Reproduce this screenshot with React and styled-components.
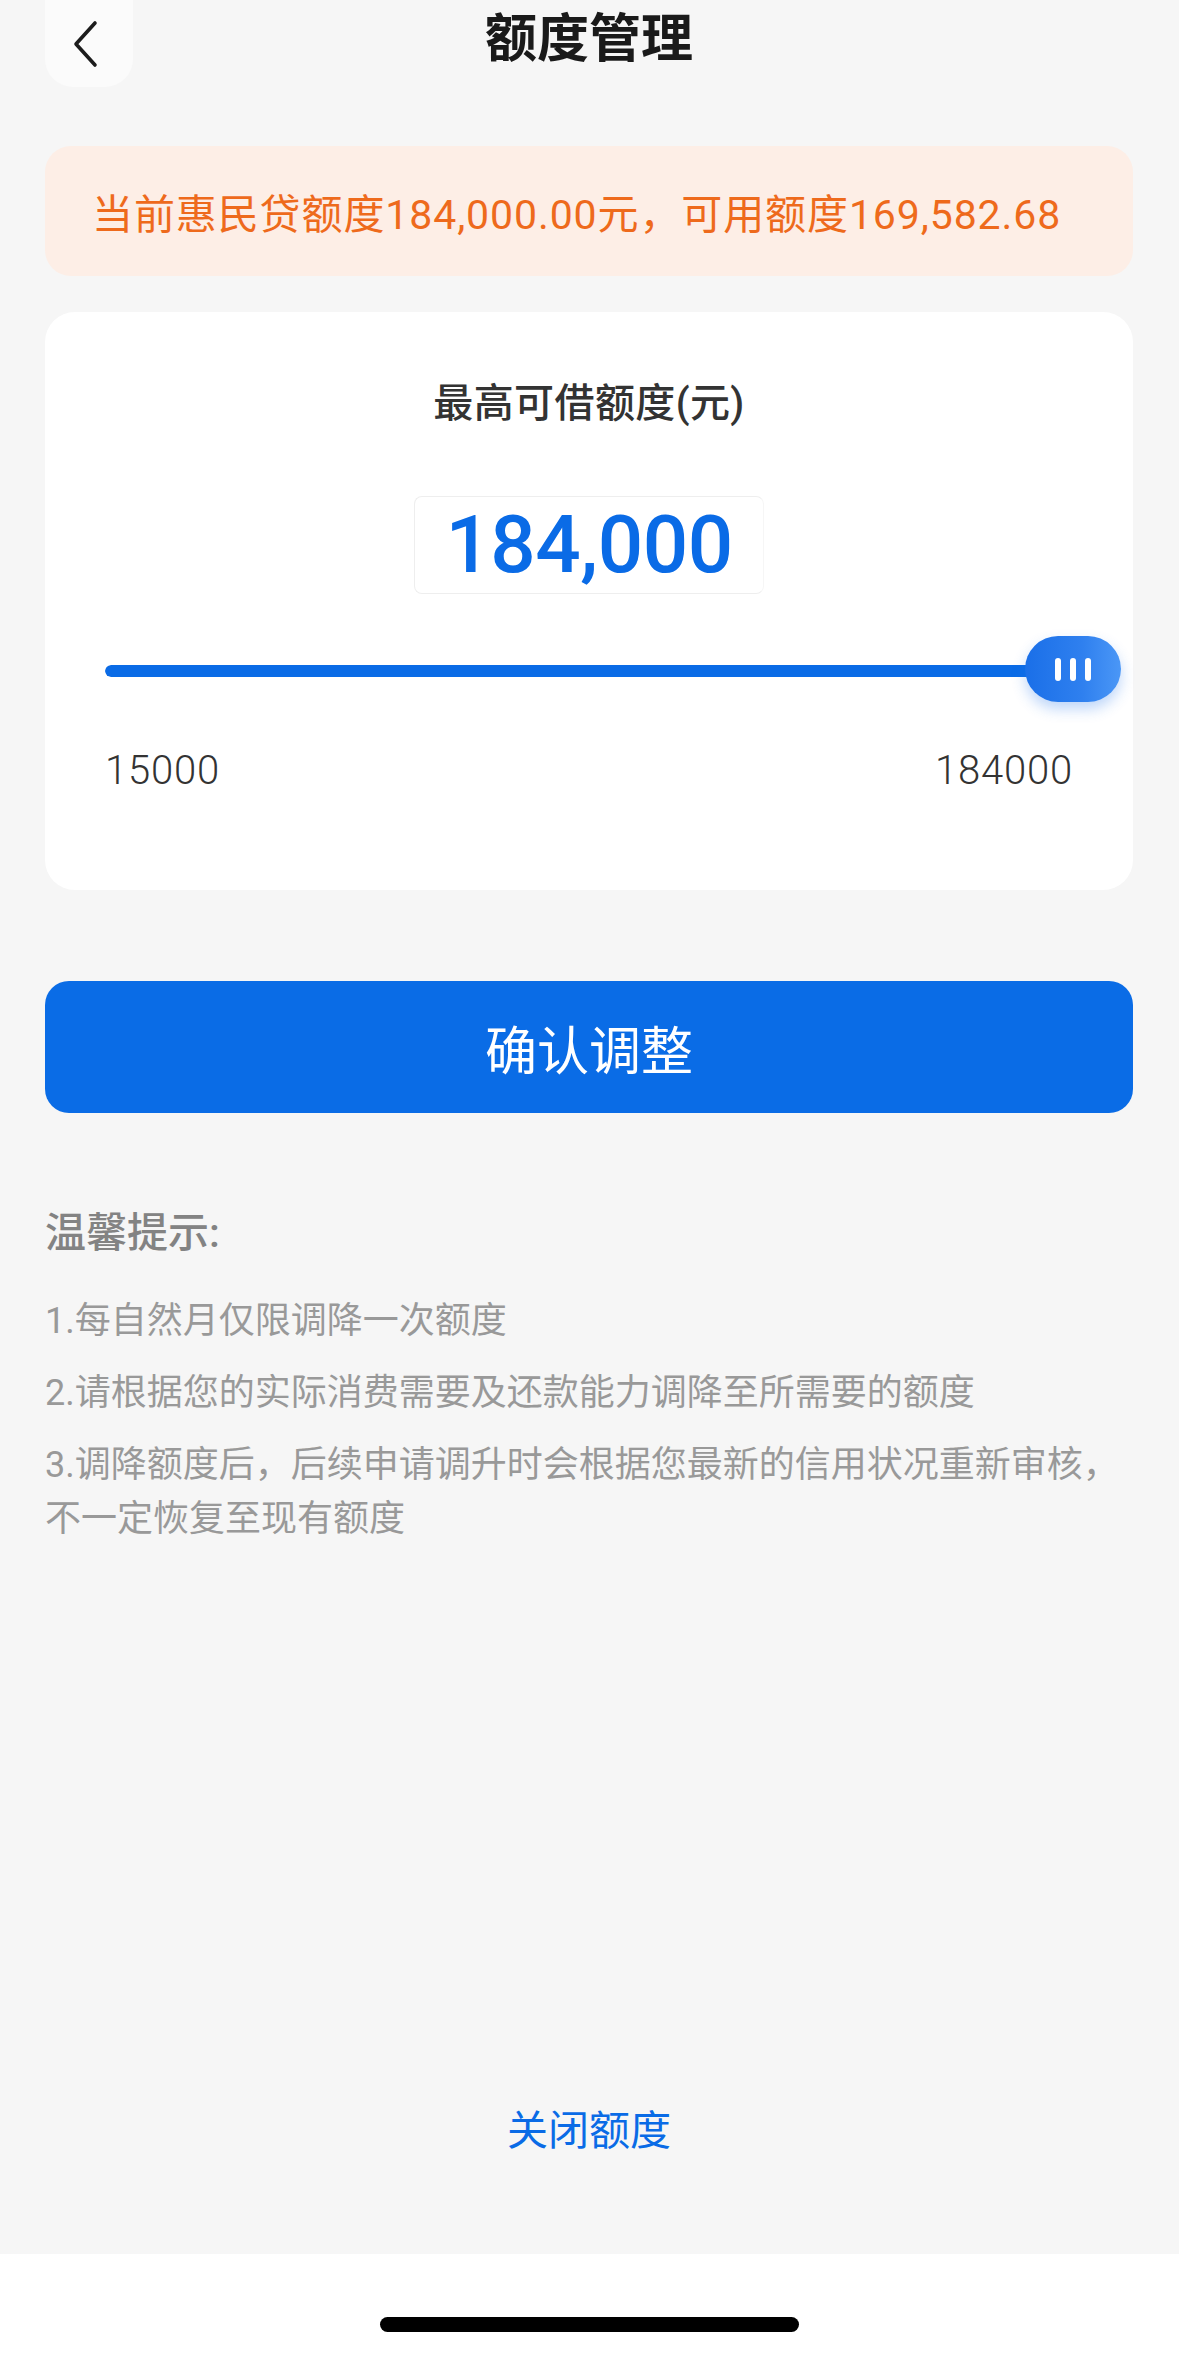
import React from 'react';
import styled, { createGlobalStyle } from 'styled-components';

const GlobalStyle = createGlobalStyle`
  html, body {
    margin: 0;
    padding: 0;
    background: #f6f6f6;
  }
  * {
    box-sizing: border-box;
  }
`;

const FONT = `Roboto, "Noto Sans CJK SC", sans-serif`;

const MIN = 15000;
const MAX = 184000;
const VALUE = 184000;

const tips = [
    '1.每自然月仅限调降一次额度',
    '2.请根据您的实际消费需要及还款能力调降至所需要的额度',
    '3.调降额度后，后续申请调升时会根据您最新的信用状况重新审核，不一定恢复至现有额度',
];

const App = () => {
    const percent = ((VALUE - MIN) / (MAX - MIN)) * 100;
    return (
        <Page>
            <GlobalStyle />
            <Main>
                <Header>
                    <BackButton aria-label="返回">
                        <svg width="30" height="48" viewBox="0 0 30 48" fill="none">
                            <polyline points="24,3 5,24 24,45" stroke="#1c1c1c" strokeWidth="3.6" strokeLinecap="round" strokeLinejoin="round" />
                        </svg>
                    </BackButton>
                    <Title>额度管理</Title>
                    <span />
                </Header>

                <Notice>当前惠民贷额度184,000.00元，可用额度169,582.68</Notice>

                <Card>
                    <CardTitle>最高可借额度(元)</CardTitle>
                    <AmountBox>184,000</AmountBox>
                    <Slider>
                        <Track>
                            <Fill style={{ width: `${percent}%` }} />
                        </Track>
                        <Thumb style={{ left: `${percent}%` }}>
                            <Grip />
                            <Grip />
                            <Grip />
                        </Thumb>
                    </Slider>
                    <RangeRow>
                        <span>{MIN}</span>
                        <span>{MAX}</span>
                    </RangeRow>
                </Card>

                <ConfirmButton>确认调整</ConfirmButton>

                <Tips>
                    <TipsTitle>温馨提示:</TipsTitle>
                    {tips.map(t => (
                        <TipItem key={t}>{t}</TipItem>
                    ))}
                </Tips>

                <CloseLink>关闭额度</CloseLink>
            </Main>
            <HomeArea>
                <HomeIndicator />
            </HomeArea>
        </Page>
    );
};

const Page = styled.div`
min-height: 2356px;
display: flex;
flex-direction: column;
background: #f6f6f6;
font-family: ${FONT};
`;

const Main = styled.div`
flex: 1;
display: flex;
flex-direction: column;
padding: 0 46px 0 45px;
`;

const Header = styled.div`
height: 87px;
display: grid;
grid-template-columns: 1fr auto 1fr;
align-items: center;
`;

const BackButton = styled.div`
width: 88px;
height: 87px;
border-radius: 0 0 28px 28px;
background: #fbfbfb;
display: flex;
align-items: center;
justify-content: center;
padding-right: 6px;
`;

const Title = styled.h1`
margin: 0 0 7px;
font-size: 52px;
font-weight: 600;
color: #1a1a1a;
line-height: 1;
`;

const Notice = styled.div`
margin-top: 59px;
height: 130px;
border-radius: 26px;
background: #fdeee6;
color: #ee6a1c;
font-size: 41px;
letter-spacing: 0.9px;
display: flex;
align-items: center;
padding-left: 47px;
white-space: nowrap;
`;

const Card = styled.div`
margin-top: 36px;
background: #fff;
border-radius: 30px;
padding: 64px 60px 95px;
display: flex;
flex-direction: column;
align-items: center;
`;

const CardTitle = styled.div`
font-size: 40px;
font-weight: 500;
color: #333;
line-height: 56px;
letter-spacing: 0.4px;
`;

const AmountBox = styled.div`
margin-top: 64px;
width: 350px;
height: 98px;
border: 1.5px solid #eeeeee;
border-right-color: #f6f6f6;
border-radius: 8px;
display: flex;
align-items: center;
justify-content: center;
font-family: Roboto, sans-serif;
font-size: 80px;
font-weight: 500;
color: #0a6be6;
letter-spacing: -0.5px;
`;

const Slider = styled.div`
position: relative;
align-self: stretch;
margin-top: 42px;
height: 66px;
display: flex;
align-items: center;
`;

const Track = styled.div`
width: 100%;
height: 12px;
border-radius: 6px;
background: #e6e9ef;
overflow: hidden;
margin-top: 4px;
`;

const Fill = styled.div`
height: 100%;
background: #0a6be6;
border-radius: 6px;
`;

const Thumb = styled.div`
position: absolute;
top: 0;
width: 96px;
height: 66px;
margin-left: -48px;
border-radius: 33px;
background: linear-gradient(90deg, #1a6fe8 0%, #2f80ef 60%, #4b97f6 100%);
box-shadow: 0 7px 14px rgba(40, 120, 235, 0.3);
display: flex;
align-items: center;
justify-content: center;
gap: 9px;
`;

const Grip = styled.span`
width: 6px;
height: 23px;
border-radius: 3px;
background: #fff;
`;

const RangeRow = styled.div`
align-self: stretch;
margin-top: 45px;
display: flex;
justify-content: space-between;
font-family: Roboto, sans-serif;
font-size: 40px;
font-weight: 300;
line-height: 48px;
letter-spacing: 0.8px;
color: #333;
`;

const ConfirmButton = styled.button`
margin-top: 91px;
height: 132px;
border: none;
border-radius: 24px;
background: #0a6ce6;
color: #fff;
font-family: ${FONT};
font-size: 52px;
font-weight: 400;
`;

const Tips = styled.div`
margin-top: 92px;
display: flex;
flex-direction: column;
gap: 18px;
`;

const TipsTitle = styled.div`
font-size: 41px;
font-weight: 500;
color: #838383;
line-height: 56px;
margin-bottom: 15px;
`;

const TipItem = styled.p`
margin: 0;
font-size: 36px;
line-height: 54px;
color: #999;
`;

const CloseLink = styled.div`
margin-top: auto;
padding-bottom: 94px;
text-align: center;
font-size: 41px;
line-height: 58px;
color: #0a6be6;
`;

const HomeArea = styled.div`
height: 102px;
background: #fff;
display: flex;
justify-content: center;
padding-top: 63px;
`;

const HomeIndicator = styled.div`
width: 419px;
height: 15px;
border-radius: 8px;
background: #000;
`;

export default App;
